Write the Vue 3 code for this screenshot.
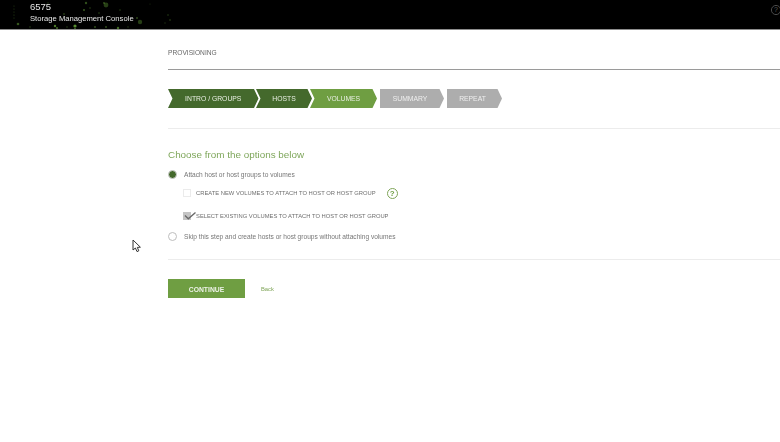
<script setup>
const steps = [
  { label: 'INTRO / GROUPS', width: 90.5, tone: 'dark', notch: true, gap: -2.5 },
  { label: 'HOSTS', width: 56, tone: 'dark', notch: true, gap: -2 },
  { label: 'VOLUMES', width: 67, tone: 'active', notch: true, gap: 3 },
  { label: 'SUMMARY', width: 64, tone: 'idle', notch: false, gap: 3 },
  { label: 'REPEAT', width: 55, tone: 'idle', notch: false, gap: 0 }
]
const specks = [
  [14,6,.6,.4],[14,9,.6,.4],[14,12,.6,.4],[14,15,.6,.45],[14,18,.6,.4],[18,24,1.3,.55],[30,27,.8,.4],
  [55,26,1.2,.8],[57,28,1,.7],[75,26,1.6,.9],[75,29,1,.7],[64,14,.8,.6],[84,10,1,.6],[86,3,1.2,.5],
  [90,8,.7,.5],[106,5,2.4,.4],[104,3,1,.5],[99,13,.8,.45],[118,28,1.2,.7],[106,27,1,.5],[120,10,.8,.4],
  [140,22,2.2,.4],[137,18,1,.45],[128,27,.7,.4],[168,15,.8,.4],[170,20,.8,.5],[165,23,.7,.35],[48,3,.7,.35],
  [95,27,.9,.55],[67,27,.8,.4],[150,4,.6,.3]
]
</script>

<template>
  <div class="page">
    <header class="top">
      <svg class="specks" width="200" height="29" viewBox="0 0 200 29" aria-hidden="true">
        <circle v-for="(s, i) in specks" :key="i" :cx="s[0]" :cy="s[1]" :r="s[2]" fill="#5f9a35" :opacity="s[3]" />
      </svg>
      <div class="brand">
        <div class="model">6575</div>
        <div class="console">Storage Management Console</div>
      </div>
      <svg class="help-top" width="12" height="12" viewBox="0 0 12 12" aria-hidden="true">
        <circle cx="6" cy="6" r="4.6" fill="none" stroke="#4a4a4a" stroke-width="1" />
        <text x="6" y="8.4" text-anchor="middle" class="help-top-mark">?</text>
      </svg>
    </header>

    <main class="content">
      <h1 class="title">PROVISIONING</h1>

      <nav class="steps">
        <div
          v-for="step in steps"
          :key="step.label"
          class="step"
          :class="[step.tone, { notch: step.notch }]"
          :style="{ width: step.width + 'px', marginRight: step.gap + 'px' }"
        >{{ step.label }}</div>
      </nav>

      <section class="options">
        <h2 class="heading">Choose from the options below</h2>

        <div class="row radio-row first">
          <span class="radio on"></span>
          <span class="radio-label">Attach host or host groups to volumes</span>
        </div>

        <div class="row check-row one">
          <span class="check"></span>
          <span class="check-label">CREATE NEW VOLUMES TO ATTACH TO HOST OR HOST GROUP</span>
          <span class="q">?</span>
        </div>

        <div class="row check-row two">
          <span class="check ticked">
            <svg class="tick" width="14" height="11" viewBox="0 0 14 11" aria-hidden="true">
              <path d="M2 6.5 L5.3 9.7 L12.5 3.5" fill="none" stroke="#6a6a6a" stroke-width="1.4" />
            </svg>
          </span>
          <span class="check-label">SELECT EXISTING VOLUMES TO ATTACH TO HOST OR HOST GROUP</span>
        </div>

        <div class="row radio-row last">
          <span class="radio"></span>
          <span class="radio-label">Skip this step and create hosts or host groups without attaching volumes</span>
        </div>
      </section>

      <div class="actions">
        <button class="continue" type="button">CONTINUE</button>
        <a class="back">Back</a>
      </div>
    </main>

    <svg class="cursor" width="10" height="14" viewBox="0 0 10 14" aria-hidden="true">
      <path d="M1 1 L1 11 L3.4 9 L5 12.6 L6.8 11.8 L5.3 8.4 L8.4 8.2 Z" fill="#fff" stroke="#333" stroke-width="1" />
    </svg>
  </div>
</template>

<style>
html, body { margin: 0; background: #fff; }
</style>

<style scoped>
.page {
  position: relative;
  width: 780px;
  height: 442px;
  overflow: hidden;
  background: #fff;
  font-family: "Liberation Sans", Arial, sans-serif;
}
.top {
  position: relative;
  height: 29px;
  background: #000;
  border-bottom: 1px solid #8c8c8c;
  color: #e6e6e6;
}
.specks { position: absolute; left: 0; top: 0; filter: blur(.5px); }
.brand { position: relative; padding: 1px 0 0 30px; filter: blur(.4px); }
.model { font-size: 9.5px; line-height: 11px; }
.console { font-size: 7.65px; line-height: 10px; margin-top: 2px; }
.help-top { position: absolute; right: -2px; top: 4px; }
.help-top-mark { font-size: 7px; fill: #5a5a5a; font-family: "Liberation Sans", sans-serif; }
.content { padding-left: 168px; }
.title {
  margin: 0;
  padding: 18px 0 12px;
  height: 9px;
  font-size: 6.65px;
  line-height: 9px;
  font-weight: 400;
  color: #666;
  border-bottom: 1px solid #9a9a9a;
  filter: blur(.35px);
}
.steps {
  display: flex;
  padding: 19px 0 20px;
  border-bottom: 1px solid #ececec;
  height: 19px;
}
.step {
  flex: none;
  box-sizing: border-box;
  height: 19px;
  display: flex;
  align-items: center;
  justify-content: center;
  font-size: 6.8px;
  color: #e8efe2;
  clip-path: polygon(0 0, calc(100% - 4.5px) 0, 100% 50%, calc(100% - 4.5px) 100%, 0 100%);
  filter: blur(.3px);
}
.step.notch {
  clip-path: polygon(0 0, calc(100% - 4.5px) 0, 100% 50%, calc(100% - 4.5px) 100%, 0 100%, 4.5px 50%);
}
.step.dark { background: #44692c; }
.step.active { background: #6f9e42; }
.step.idle { background: #adadad; color: #efefef; padding-right: 4px; }
.options {
  padding-bottom: 16px;
  border-bottom: 1px solid #ececec;
}
.heading {
  margin: 0;
  padding-top: 20px;
  font-size: 9.9px;
  line-height: 12px;
  font-weight: 400;
  color: #7ea65a;
  filter: blur(.3px);
}
.row { display: flex; align-items: center; filter: blur(.35px); }
.radio-row.first { margin-top: 6px; height: 14px; }
.radio-row.last { margin-top: 6px; height: 14px; }
.check-row.one { margin-top: 4px; height: 16px; padding-left: 15px; }
.check-row.two { margin-top: 8px; height: 14px; padding-left: 15px; }
.radio {
  flex: none;
  box-sizing: border-box;
  width: 9px;
  height: 9px;
  margin-right: 7px;
  border-radius: 50%;
  border: 1px solid #bdbdbd;
  background: #fff;
}
.radio.on {
  background: #44692c;
  border: 1.5px solid #d0d0d0;
}
.radio-label { font-size: 6.6px; color: #777; }
.check {
  position: relative;
  flex: none;
  box-sizing: border-box;
  width: 8px;
  height: 8px;
  margin-right: 5px;
  border: 1px solid #ebebeb;
  background: #fff;
}
.check.ticked { background: #c4c4c4; border-color: #c4c4c4; }
.tick { position: absolute; left: -1px; top: -4px; }
.check-label { font-size: 5.82px; color: #6e6e6e; }
.q {
  flex: none;
  box-sizing: border-box;
  width: 11px;
  height: 11px;
  margin-left: 11px;
  border: 1px solid #7ea457;
  border-radius: 50%;
  color: #6f9e42;
  font-size: 8px;
  font-weight: 700;
  line-height: 9px;
  text-align: center;
}
.actions {
  display: flex;
  align-items: center;
  margin-top: 19px;
}
.continue {
  width: 77px;
  height: 19px;
  padding: 1px 0 0;
  border: 0;
  background: #6f9e42;
  color: #eef3e8;
  font-family: inherit;
  font-size: 6.8px;
  font-weight: 700;
  filter: blur(.25px);
}
.back { margin-left: 16px; font-size: 5.8px; color: #7ea457; filter: blur(.25px); }
.cursor { position: absolute; left: 132px; top: 239px; filter: blur(.3px); }
</style>
